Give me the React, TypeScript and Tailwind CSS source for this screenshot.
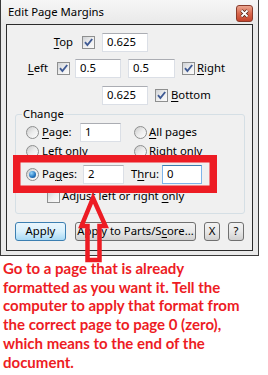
import React from "react";

const Check = ({ className = "", checked = true }: { className?: string; checked?: boolean }) => (
  <span
    className={`w-[13px] h-[13px] shrink-0 border border-[#8e8f8f] bg-gradient-to-br from-[#cfd2d6] via-[#eeeeee] to-[#fbfbfb] flex items-center justify-center ${className}`}
  >
    {checked && (
      <svg width="11" height="11" viewBox="0 0 11 11">
        <path d="M2 5.2 L4.4 8 L9.2 2" stroke="#3f5a94" strokeWidth="1.9" fill="none" />
      </svg>
    )}
  </span>
);

const Radio = ({ className = "", selected = false }: { className?: string; selected?: boolean }) => (
  <span
    className={`w-[13px] h-[13px] shrink-0 rounded-full border border-[#8e8f8f] bg-gradient-to-br from-[#cbcbcb] via-[#ececec] to-[#fdfdfd] flex items-center justify-center ${className}`}
  >
    {selected && (
      <span className="w-[7px] h-[7px] rounded-full bg-[radial-gradient(circle_at_35%_30%,#9ad8fb,#2a7cc4_55%,#0d3f78)]" />
    )}
  </span>
);

const Field = ({ className = "", children, focus = false }: { className?: string; children: React.ReactNode; focus?: boolean }) => (
  <div
    className={`h-[19px] shrink-0 bg-white border flex items-center pl-[4px] text-black ${
      focus ? "border-[#7eb4ea] border-t-[#3d7bad]" : "border-[#dbdfe6] border-t-[#abadb3]"
    } ${className}`}
  >
    {children}
  </div>
);

const Btn = ({ className = "", children, def = false }: { className?: string; children: React.ReactNode; def?: boolean }) => (
  <div
    className={`h-[19px] shrink-0 rounded-[3px] border flex items-center justify-center text-black ${
      def
        ? "border-[#3c7fb1] bg-gradient-to-b from-[#eaf6fd] via-[#d9f0fc] to-[#a7d9f5]"
        : "border-[#707070] bg-gradient-to-b from-[#f2f2f2] via-[#e8e8e8] to-[#d0d0d0]"
    } ${className}`}
  >
    {children}
  </div>
);

export default function App() {
  return (
    <div className="relative w-[268px] h-[375px] bg-white overflow-hidden font-['Noto_Sans',sans-serif] text-[11.3px] text-black">
      {/* window */}
      <div className="w-[259px] h-[256px] border-x border-b border-[#3a3a3a] bg-[#e9e9e9] flex flex-col">
        <div className="h-[24px] shrink-0 flex items-start justify-between bg-gradient-to-b from-[#f6f6f6] to-[#e9e9e9]">
          <span className="ml-[7px] mt-[4px] leading-[16px]">Edit Page Margins</span>
          <div className="mt-[5px] mr-[5px] w-[17px] h-[17px] rounded-[3px] border border-[#8a3b2b] bg-gradient-to-b from-[#eaa58f] via-[#d9674d] to-[#c4432c] flex items-center justify-center">
            <svg width="9" height="9" viewBox="0 0 9 9">
              <path d="M1.5 1.5 L7.5 7.5 M7.5 1.5 L1.5 7.5" stroke="#4a1f16" strokeWidth="3.2" />
              <path d="M1.5 1.5 L7.5 7.5 M7.5 1.5 L1.5 7.5" stroke="#ffffff" strokeWidth="1.8" />
            </svg>
          </div>
        </div>

        {/* client area */}
        <div className="ml-[5px] w-[247px] h-[227px] border border-[#2b2b2b] bg-[#f0f0f0] flex flex-col">
          <div className="mt-[8px] h-[19px] flex items-center">
            <span className="w-[66px] text-right">
              <u className="underline-offset-2">T</u>op
            </span>
            <Check className="ml-[9px]" />
            <Field className="ml-[7px] w-[46px]">0.625</Field>
          </div>

          <div className="mt-[7px] h-[19px] flex items-center">
            <span className="w-[41px] text-right">
              <u className="underline-offset-2">L</u>eft
            </span>
            <Check className="ml-[9px]" />
            <Field className="ml-[5px] w-[46px]">0.5</Field>
            <Field className="ml-[7px] w-[47px]">0.5</Field>
            <Check className="ml-[7px]" />
            <span className="ml-[2px]">
              <u className="underline-offset-2">R</u>ight
            </span>
          </div>

          <div className="mt-[8px] h-[19px] flex items-center">
            <Field className="ml-[95px] w-[46px]">0.625</Field>
            <Check className="ml-[7px]" />
            <span className="ml-[3px]">
              <u className="underline-offset-2">B</u>ottom
            </span>
          </div>

          {/* group box */}
          <div className="relative mt-[9px] ml-[8px] w-[230px] h-[100px] shrink-0 border border-[#d5dfe5] rounded-[3px] flex flex-col">
            <span className="absolute -top-[9px] left-[6px] px-[1px] bg-[#f0f0f0] leading-[16px]">Change</span>

            <div className="mt-[8px] h-[19px] flex items-center">
              <Radio className="ml-[10px]" />
              <span className="ml-[3px] w-[38px]">
                <u className="underline-offset-2">P</u>age:
              </span>
              <Field className="w-[41px]">1</Field>
              <Radio className="ml-[13px]" />
              <span className="ml-[2px]">
                <u className="underline-offset-2">A</u>ll pages
              </span>
            </div>

            <div className="h-[19px] flex items-center">
              <Radio className="ml-[10px]" />
              <span className="ml-[3px] w-[79px]">Left only</span>
              <Radio className="ml-[13px]" />
              <span className="ml-[2px]">Right only</span>
            </div>

            <div className="mt-[4px] h-[19px] flex items-center">
              <Radio className="ml-[10px]" selected />
              <span className="ml-[3px] w-[41px]">
                Pa<u className="underline-offset-2">g</u>es:
              </span>
              <Field className="w-[41px]">2</Field>
              <span className="ml-[7px] w-[31px]">
                T<u className="underline-offset-2">h</u>ru:
              </span>
              <Field className="w-[40px]" focus>
                0
              </Field>
            </div>

            <div className="mt-[3px] h-[19px] flex items-center">
              <Check className="ml-[31px]" checked={false} />
              <span className="ml-[2px]">
                Adjust left or right <u className="underline-offset-2">o</u>nly
              </span>
            </div>
          </div>

          {/* buttons */}
          <div className="mt-[8px] flex items-center">
            <Btn className="ml-[8px] w-[51px]" def>
              Apply
            </Btn>
            <Btn className="ml-[9px] w-[121px]">
              Apply to Parts/S<u className="underline-offset-2">c</u>ore...
            </Btn>
            <Btn className="ml-[8px] w-[16px]">X</Btn>
            <Btn className="ml-[8px] w-[16px]">?</Btn>
          </div>
        </div>
      </div>

      {/* annotation text */}
      <div className="mt-[3px] pl-[3px] font-['Lato',sans-serif] font-bold text-[15px] leading-[18.7px] text-[#ed1c24]">
        <div className="whitespace-nowrap">Go to a page that is already</div>
        <div className="whitespace-nowrap">formatted as you want it. Tell the</div>
        <div className="whitespace-nowrap">computer to apply that format from</div>
        <div className="whitespace-nowrap">the correct page to page 0 (zero),</div>
        <div className="whitespace-nowrap">which means to the end of the</div>
        <div className="whitespace-nowrap">document.</div>
      </div>

      {/* red annotation overlay */}
      <svg className="absolute inset-0 pointer-events-none" width="268" height="375" viewBox="0 0 268 375">
        <rect x="16.75" y="158.75" width="196.5" height="30.5" fill="none" stroke="#ed1c24" strokeWidth="7.5" />
        <path
          d="M93 198 L81.5 226 L87.5 226 L87.5 260 L99.5 260 L99.5 226 L105.5 226 Z"
          fill="none"
          stroke="#ed1c24"
          strokeWidth="4.5"
          strokeLinejoin="miter"
        />
      </svg>
    </div>
  );
}
